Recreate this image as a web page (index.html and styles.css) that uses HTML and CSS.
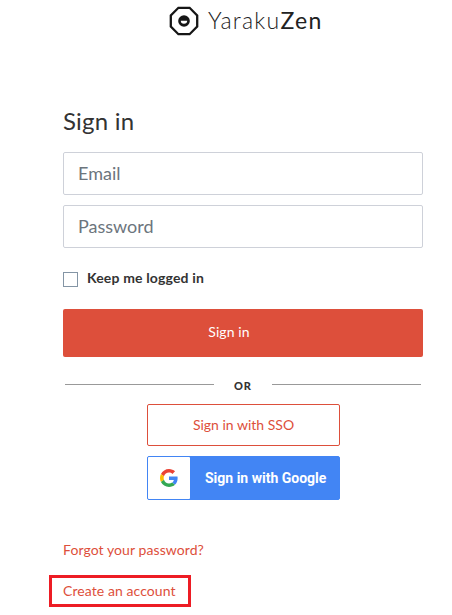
FILE: index.html
```html
<!DOCTYPE html>
<html lang="en">
<head>
    <meta charset="UTF-8">
    <meta name="viewport" content="width=device-width, initial-scale=1.0">
    <title>YarakuZen - Sign in</title>
    <link rel="stylesheet" href="styles.css">
</head>
<body>

    <!-- Logo -->
    <header class="logo">
        <svg class="logo-mark" viewBox="0 0 30 30" aria-hidden="true">
            <path d="M9.4 1.8h11.2l7.6 7.6v11.2l-7.6 7.6H9.4l-7.6-7.6V9.4z" fill="none" stroke="#161616" stroke-width="2.3"/>
            <circle cx="15" cy="15" r="5.8" fill="#161616"/>
            <path d="M11.8 14.8h6.4a3.2 3 0 0 1-6.4 0z" fill="#fff"/>
        </svg>
        <span class="logo-text">Yaraku<b>Zen</b></span>
    </header>

    <!-- Sign in form -->
    <main class="container">
        <h1>Sign in</h1>
        <form class="login-form">
            <input class="field" type="email" placeholder="Email" aria-label="Email">
            <input class="field" type="password" placeholder="Password" aria-label="Password">
            <label class="remember">
                <input class="checkbox" type="checkbox">
                <span>Keep me logged in</span>
            </label>
            <button class="btn btn-primary" type="submit">Sign in</button>
        </form>

        <div class="divider"><span>OR</span></div>

        <div class="button-group">
            <a href="#" class="btn btn-sso">Sign in with SSO</a>
            <a href="#" class="btn btn-google">
                <span class="google-icon">
                    <svg viewBox="0 0 48 48" aria-hidden="true">
                        <path fill="#EA4335" d="M24 9.5c3.54 0 6.71 1.22 9.21 3.6l6.85-6.85C35.9 2.38 30.47 0 24 0 14.62 0 6.51 5.38 2.56 13.22l7.98 6.19C12.43 13.72 17.74 9.5 24 9.5z"/>
                        <path fill="#4285F4" d="M46.98 24.55c0-1.57-.15-3.09-.38-4.55H24v9.02h12.94c-.58 2.96-2.26 5.48-4.78 7.18l7.73 6c4.51-4.18 7.09-10.36 7.09-17.65z"/>
                        <path fill="#FBBC05" d="M10.53 28.59c-.48-1.45-.76-2.99-.76-4.59s.27-3.14.76-4.59l-7.98-6.19C.92 16.46 0 20.12 0 24c0 3.88.92 7.54 2.56 10.78l7.97-6.19z"/>
                        <path fill="#34A853" d="M24 48c6.48 0 11.93-2.13 15.89-5.81l-7.73-6c-2.15 1.45-4.92 2.3-8.16 2.3-6.26 0-11.57-4.22-13.47-9.91l-7.98 6.19C6.51 42.62 14.62 48 24 48z"/>
                    </svg>
                </span>
                <span class="google-text">Sign in with Google</span>
            </a>
        </div>

        <div class="links">
            <a href="#">Forgot your password?</a>
            <a href="#" class="create-account">Create an account</a>
        </div>
    </main>

</body>
</html>
```
FILE: styles.css
```css
:root {
    --color-text: #333333;
    --color-placeholder: #6c757d;
    --color-border: #ced1d9;
    --color-primary: #dd4f3b;
    --color-google: #4285f4;
    --color-highlight: #ed1c24;
    --font-family: 'Lato', sans-serif;
}

* {
    margin: 0;
    padding: 0;
    box-sizing: border-box;
}

body {
    background-color: #fff;
    color: var(--color-text);
    font-family: var(--font-family);
}

a {
    color: var(--color-primary);
    text-decoration: none;
}

/* Logo */
.logo {
    display: flex;
    align-items: center;
    gap: 9px;
    height: 42px;
    padding-left: 169px;
}

.logo-mark {
    width: 30px;
    height: 30px;
}

.logo-text {
    padding-bottom: 2px;
    color: #222;
    font-size: 23px;
    font-weight: 300;
    letter-spacing: 1.25px;
    white-space: nowrap;
}

.logo-text b {
    font-weight: 400;
}

/* Form */
.container {
    width: 360px;
    margin-left: 63px;
    padding-top: 62px;
}

h1 {
    height: 48px;
    line-height: 34px;
    font-size: 24px;
    font-weight: 400;
    letter-spacing: 0.2px;
}

.login-form {
    display: flex;
    flex-direction: column;
    gap: 10px;
}

.field {
    height: 43px;
    padding: 0 14px 2px;
    border: 1px solid var(--color-border);
    border-radius: 2px;
    font-family: inherit;
    font-size: 18px;
}

.field::placeholder {
    color: var(--color-placeholder);
    opacity: 1;
}

.remember {
    display: flex;
    align-items: center;
    gap: 9px;
    height: 18px;
    margin: 12px 0 11px;
    font-size: 14px;
    font-weight: 700;
    letter-spacing: 0.15px;
}

.remember span {
    padding-bottom: 3px;
}

.checkbox {
    appearance: none;
    width: 15px;
    height: 15px;
    margin-top: 1px;
    border: 1px solid #8495a5;
}

/* Buttons */
.btn {
    display: flex;
    align-items: center;
    justify-content: center;
    border-radius: 2px;
    font-family: inherit;
    font-size: 14px;
}

.btn-primary {
    height: 48px;
    padding: 0 28px 3px 0;
    border: none;
    background-color: var(--color-primary);
    color: #fff;
    letter-spacing: 0.1px;
}

.divider {
    display: flex;
    height: 47px;
    padding: 27px 2px 0;
    font-size: 11px;
    font-weight: 900;
    line-height: 4px;
    letter-spacing: 1px;
}

.divider::before,
.divider::after {
    content: '';
    flex: 1;
    height: 1px;
    background-color: #999;
}

.divider span {
    width: 58px;
    text-align: center;
}

.button-group {
    display: flex;
    flex-direction: column;
    gap: 10px;
    width: 193px;
    margin-left: 84px;
}

.btn-sso {
    height: 42px;
    padding-bottom: 1px;
    border: 1px solid var(--color-primary);
}

.btn-google {
    height: 44px;
    border: 1px solid var(--color-google);
    background-color: var(--color-google);
    color: #fff;
    font-family: 'Roboto', sans-serif;
    font-weight: 700;
}

.google-icon {
    display: flex;
    align-items: center;
    justify-content: center;
    width: 42px;
    height: 42px;
    border-radius: 1px;
    background-color: #fff;
}

.google-icon svg {
    width: 18px;
    height: 18px;
}

.google-text {
    flex: 1;
    padding-left: 15px;
    white-space: nowrap;
}

/* Bottom links */
.links {
    display: flex;
    flex-direction: column;
    align-items: flex-start;
    padding-top: 40px;
    font-size: 14px;
    line-height: 20px;
    letter-spacing: 0.08px;
}

.create-account {
    width: 142px;
    height: 32px;
    margin: 15px 0 0 -14px;
    padding-left: 11px;
    border: 3px solid var(--color-highlight);
    line-height: 26px;
    white-space: nowrap;
}
```
